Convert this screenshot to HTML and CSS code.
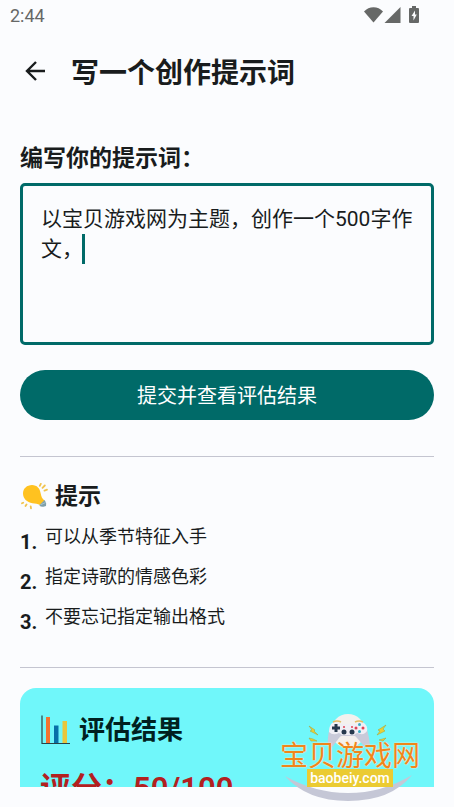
FILE: index.html
```html
<!DOCTYPE html>
<html lang="zh-CN">
<head>
<meta charset="utf-8">
<meta name="viewport" content="width=device-width, initial-scale=1">
<title>写一个创作提示词</title>
<link rel="stylesheet" href="styles.css">
</head>
<body>
<div class="app">
  <div class="status">
    <span class="clock">2:44</span>
    <svg class="status-icons" width="56" height="18" viewBox="0 0 56 18" aria-hidden="true">
      <path d="M0 5.500C5-.200 14-.200 19 5.500L9.500 16.500Z"/>
      <path d="M36.500 1V17H20.500Z"/>
      <path fill-rule="evenodd" d="M48 0H52V2H54Q55 2 55 3V16Q55 17 54 17H46Q45 17 45 16V3Q45 2 46 2H48ZM51 4.500 47.500 10H49.500V14.500L52.800 8.500H51Z"/>
    </svg>
  </div>
  <header class="topbar">
    <button class="back" type="button" aria-label="返回">
      <svg width="22" height="22" viewBox="0 0 22 22" aria-hidden="true"><path d="M21 10H3M12 1 3 10 12 19"/></svg>
    </button>
    <h1 class="title">写一个创作提示词</h1>
  </header>

  <main class="content">
    <form class="prompt">
      <label class="label" for="prompt-text">编写你的提示词：</label>
      <div class="field">
        <textarea class="input" id="prompt-text" spellcheck="false">以宝贝游戏网为主题，创作一个500字作文，</textarea>
        <span class="caret"></span>
      </div>
      <button class="submit" type="button">提交并查看评估结果</button>
    </form>

    <hr class="divider">

    <section class="tips">
      <h2 class="tips-title">
        <svg width="28" height="28" viewBox="0 0 28 28" aria-hidden="true">
          <path fill="#ffc220" d="M3 10.500C3 5.500 7 2 12 2C17 2 20 5.500 20.700 10.500C21.300 13.500 22 15.500 24.500 17.500L20 22C17.500 20.300 15.500 20.800 12.500 20.200C7 19.300 3 15.500 3 10.500Z"/>
          <path fill="#7f9fa9" d="M24.600 17 19.300 22.200Q20.500 24 23.500 23.700L26 23Q27 20 24.600 17Z"/>
          <path fill="none" stroke="#a9c6ce" d="M20.500 21.800 25.700 19.500"/>
          <path fill="none" stroke="#f1c34c" stroke-width="1.800" stroke-linecap="round" d="M20.800.900 19.800 2.800M24.800 2.500 22.500 4.800M27 6.700 24.500 7.600M3.200 19.700 2 20.300M6.500 21.500 5.500 23M10.700 23.300 11 25.300"/>
        </svg>
        <span>提示</span>
      </h2>
      <ol class="tips-list">
        <li class="tip"><b class="num">1.</b><span class="tip-text">可以从季节特征入手</span></li>
        <li class="tip"><b class="num">2.</b><span class="tip-text">指定诗歌的情感色彩</span></li>
        <li class="tip"><b class="num">3.</b><span class="tip-text">不要忘记指定输出格式</span></li>
      </ol>
    </section>

    <hr class="divider">

    <section class="result">
      <h2 class="result-title">
        <svg width="30" height="30" viewBox="0 0 30 30" aria-hidden="true">
          <path fill="#f3722f" d="M6 2H10V28H6Z"/>
          <path fill="#0870a8" d="M14 10.500H18.500V28H14Z"/>
          <path fill="#e9c63c" d="M22.500 6H27V28H22.500Z"/>
          <path fill="none" stroke="#2a4347" stroke-width="1.200" d="M2 .500V28.500H30"/>
        </svg>
        <span>评估结果</span>
      </h2>
      <p class="score">评分：50/100</p>
    </section>
  </main>

  <div class="watermark">
    <svg class="art" viewBox="0 0 140 90" aria-hidden="true">
      <path fill="#c5c7d6" d="M5 63Q35 80 68 80Q102 80 132 62Q111 88 68 88Q27 88 5 63Z"/>
      <ellipse cx="68" cy="18" rx="17" ry="17" fill="#f4f1ee"/>
      <path fill="#c9cad9" d="M52 11Q56 9 60 12H76Q80 9 84 11Q88 15 90 32Q88 37 84 33L77 25Q75 22 72 23H64Q61 22 59 25L53 33Q48 37 48 32Q47 19 52 11Z"/>
      <path fill="#f0eff5" d="M52 10Q56 8 61 11H76Q80 8 84 10Q88 13 87 18Q84 23 77 20L74 22H62L59 20Q53 23 49 19Q49 13 52 10Z"/>
      <path fill="none" stroke="#e4bc63" stroke-width="1.500" d="M53 9Q57 7 61 9M75 9Q79 7 83 9"/>
      <path fill="none" stroke="#26394d" stroke-width="3" d="M56 11V19M52 15H60"/>
      <g fill="#26394d"><circle cx="64" cy="19" r="2.500"/><circle cx="72" cy="19" r="2.500"/></g>
      <g fill="#df4255"><circle cx="64" cy="14" r="1"/><circle cx="72" cy="14" r="1"/><circle cx="76" cy="15" r="1.500"/><circle cx="83" cy="15" r="1.500"/></g>
      <g fill="#36adc5"><circle cx="79.500" cy="11.500" r="1.500"/><circle cx="79.500" cy="18.500" r="1.500"/></g>
      <path fill="#ead035" stroke="#a99c35" stroke-width=".500" d="M29 13 35 17 34 18 38 22 30 18 32 17ZM29 25 33 26 37 28 31 28ZM106 12 98 17 100 18 97 22 105 18 103 16ZM106 25 99 27 103 28Z"/>
    </svg>
    <span class="brand">宝贝游戏网</span>
    <span class="site">baobeiy.com</span>
  </div>
</div>
</body>
</html>
```
FILE: styles.css
```css
:root {
  --teal: #006a68;
  --ink: #191c1d;
  --page: #fbfcfe;
}

* {
  box-sizing: border-box;
}

body {
  margin: 0;
  background: var(--page);
  color: var(--ink);
  font-family: Roboto, "Noto Sans CJK SC", sans-serif;
}

h1, h2, p, ol {
  margin: 0;
  padding: 0;
}

svg {
  flex: none;
  display: block;
}

.app {
  position: relative;
  display: flex;
  flex-direction: column;
  height: 100vh;
  padding-bottom: 20px;
}

.status {
  display: flex;
  flex: none;
  align-items: center;
  justify-content: space-between;
  height: 32px;
  padding: 0 34px 2px 10px;
  color: #666867;
}

.clock {
  font-size: 18px;
}

.status-icons {
  fill: #666867;
}

.topbar {
  display: flex;
  flex: none;
  align-items: center;
  gap: 15px;
  height: 84px;
  padding: 0 14px;
}

.back {
  display: grid;
  place-items: center;
  width: 42px;
  height: 42px;
  padding: 0 0 4px;
  border: 0;
  background: none;
}

.back path {
  fill: none;
  stroke: var(--ink);
  stroke-width: 2.4;
}

.title {
  font-size: 28px;
  font-weight: 600;
  line-height: 40px;
}

.content {
  flex: 1;
  min-height: 0;
  padding: 27px 20px 0;
  overflow-y: auto;
  scrollbar-width: none;
}

.label {
  display: block;
  margin-bottom: 8px;
  font-size: 23px;
  font-weight: 600;
  line-height: 32px;
}

.field {
  position: relative;
  margin-bottom: 25px;
}

.input {
  display: block;
  width: 100%;
  height: 162px;
  padding: 18px 12px 16px 18px;
  border: 3px solid var(--teal);
  border-radius: 5px;
  outline: 0;
  background: none;
  color: var(--ink);
  font: inherit;
  font-size: 21px;
  line-height: 30px;
  resize: none;
}

.caret {
  position: absolute;
  top: 51px;
  left: 62px;
  width: 3px;
  height: 30px;
  background: var(--teal);
}

.submit {
  display: block;
  width: 100%;
  height: 50px;
  padding: 0 0 2px;
  border: 0;
  border-radius: 25px;
  background: var(--teal);
  color: #fff;
  font: inherit;
  font-size: 20px;
}

.divider {
  height: 1px;
  margin: 36px 0 24px;
  border: 0;
  background: #c4c5d0;
}

.tips-title {
  display: flex;
  align-items: center;
  gap: 7px;
  margin-bottom: 9px;
  font-size: 23px;
  font-weight: 600;
  line-height: 32px;
}

.tips-list {
  list-style: none;
}

.tip {
  display: flex;
  align-items: flex-start;
}

.num {
  width: 25px;
  font-size: 20px;
  line-height: 40px;
}

.tip-text {
  font-size: 18px;
  line-height: 30px;
}

.tips + .divider {
  margin: 25px 0 20px;
}

.result {
  padding: 22px 20px;
  border-radius: 16px;
  background: #70f7fa;
}

.result-title {
  display: flex;
  align-items: center;
  gap: 9px;
  margin-bottom: 17px;
  color: #002020;
  font-size: 26px;
  font-weight: 600;
  line-height: 40px;
}

.score {
  color: #b3201f;
  font-size: 31px;
  font-weight: 600;
  line-height: 44px;
}

.watermark {
  position: absolute;
  right: 34px;
  bottom: 4px;
  display: grid;
  justify-items: center;
  align-content: end;
  width: 140px;
  height: 90px;
  padding-bottom: 16px;
  pointer-events: none;
}

.art {
  position: absolute;
  inset: 0;
}

.brand {
  position: relative;
  color: #ef861b;
  font-size: 28px;
  line-height: 24px;
  white-space: nowrap;
  text-shadow: 0 0 1px #fff, 0 0 2px #ffe9c0;
}

.site {
  position: relative;
  padding: 0 3px;
  background: #ebcb32;
  color: #fff;
  font-size: 14px;
  font-weight: 500;
  line-height: 18px;
}
```
